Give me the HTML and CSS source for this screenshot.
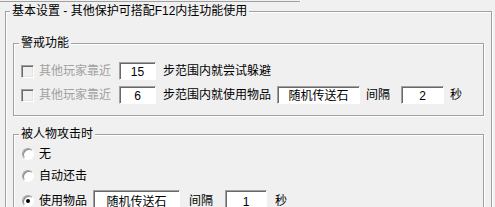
FILE: index.html
```html
<!DOCTYPE html>
<html lang="zh-CN">
<head>
<meta charset="utf-8">
<title>基本设置</title>
<link rel="stylesheet" href="styles.css">
</head>
<body>
<div class="tabedge"><span class="seg-a"></span><span class="seg-b"></span></div>
<fieldset class="group outer">
  <legend class="cap cap-outer">基本设置 - 其他保护可搭配F12内挂功能使用</legend>
  <div class="outer-body">
    <fieldset class="group inner g1">
      <legend class="cap cap-inner">警戒功能</legend>
      <div class="g1-rows">
        <div class="row">
          <span class="chk"></span>
          <span class="txt dis ml5">其他玩家靠近</span>
          <span class="edit w37 ml8">15</span>
          <span class="txt ml7">步范围内就尝试躲避</span>
        </div>
        <div class="row">
          <span class="chk"></span>
          <span class="txt dis ml5">其他玩家靠近</span>
          <span class="edit w37 ml8">6</span>
          <span class="txt ml7">步范围内就使用物品</span>
          <span class="edit w83 ml6">随机传送石</span>
          <span class="txt ml6">间隔</span>
          <span class="edit w43 ml11">2</span>
          <span class="txt ml6">秒</span>
        </div>
      </div>
    </fieldset>
    <fieldset class="group inner g2">
      <legend class="cap cap-inner">被人物攻击时</legend>
      <div class="g2-rows">
        <div class="row r1">
          <span class="radio"></span>
          <span class="txt ml5">无</span>
        </div>
        <div class="row r2">
          <span class="radio"></span>
          <span class="txt ml5">自动还击</span>
        </div>
        <div class="row r3">
          <span class="radio on"></span>
          <span class="txt ml5">使用物品</span>
          <span class="edit tall w87 ml6">随机传送石</span>
          <span class="txt ml9">间隔</span>
          <span class="edit tall w42 ml12">1</span>
          <span class="txt ml8">秒</span>
        </div>
      </div>
    </fieldset>
  </div>
</fieldset>
</body>
</html>
```
FILE: styles.css
```css
html, body {
  margin: 0;
  padding: 0;
  background: #f0f0f0;
}
body {
  font-family: "Liberation Sans", "Noto Sans CJK SC", sans-serif;
  font-size: 12px;
  line-height: 14px;
  color: #000;
  overflow: hidden;
  height: 207px;
}

.tabedge {
  display: flex;
  height: 2px;
}
.seg-a {
  width: 300px;
  height: 1px;
  border-bottom: 1px solid #a0a0a0;
  box-sizing: border-box;
  height: 2px;
}
.seg-b {
  width: 1px;
  height: 2px;
  background: #fff;
}

.group {
  margin: 0;
  padding: 0;
  min-width: 0;
  border: 1px solid #a0a0a0;
  box-shadow: 1px 1px 0 #fff, inset 1px 1px 0 #fff;
}

.cap {
  padding: 0 2px;
  line-height: 14px;
  background: #f0f0f0;
  white-space: nowrap;
}
.cap-outer { margin-left: 4px; }
.cap-inner { margin-left: 5px; }

.outer {
  margin: 2px 3px 0 5px;
  height: 260px;
}
.outer-body {
  padding: 9px 7px 0 7px;
}

.g1 { margin-top: 9px; }
.g1-rows {
  padding: 12px 0 11px 7px;
  display: flex;
  flex-direction: column;
  gap: 6px;
}

.g2 { margin-top: 11px; height: 120px; }
.g2-rows {
  padding: 4px 0 0 8px;
  display: flex;
  flex-direction: column;
}
.r2 { margin-top: 4px; }
.r3 { margin-top: 5px; height: 22px; }

.row {
  display: flex;
  align-items: center;
  height: 18px;
}
.row.r3 { height: 22px; }

.txt { white-space: nowrap; }
.dis { color: #a0a0a0; }

.edit {
  box-sizing: border-box;
  height: 18px;
  background: #fff;
  border: 1px solid;
  border-color: #a0a0a0 #fff #fff #a0a0a0;
  box-shadow: inset 1px 1px 0 #696969;
  display: flex;
  align-items: center;
  justify-content: center;
  padding-top: 1px;
  white-space: nowrap;
}
.edit.tall { height: 22px; }

.w37 { width: 37px; }
.w42 { width: 42px; }
.w43 { width: 43px; }
.w83 { width: 83px; }
.w87 { width: 87px; }

.ml5 { margin-left: 5px; }
.ml6 { margin-left: 6px; }
.ml7 { margin-left: 7px; }
.ml8 { margin-left: 8px; }
.ml9 { margin-left: 9px; }
.ml11 { margin-left: 11px; }
.ml12 { margin-left: 12px; }

.chk {
  box-sizing: border-box;
  width: 13px;
  height: 13px;
  flex: none;
  background: #f0f0f0;
  border: 1px solid;
  border-color: #a0a0a0 #fff #fff #a0a0a0;
  box-shadow: inset 1px 1px 0 #696969, inset -1px -1px 0 #e3e3e3;
}

.radio {
  box-sizing: border-box;
  width: 12px;
  height: 12px;
  flex: none;
  border-radius: 50%;
  background: #fff;
  border: 1px solid;
  border-color: #a0a0a0 #fff #fff #a0a0a0;
  box-shadow: inset 1px 1px 0 #8a8a8a;
  display: flex;
  align-items: center;
  justify-content: center;
}
.radio.on::after {
  content: "";
  width: 4px;
  height: 4px;
  border-radius: 50%;
  background: #000;
}
```
